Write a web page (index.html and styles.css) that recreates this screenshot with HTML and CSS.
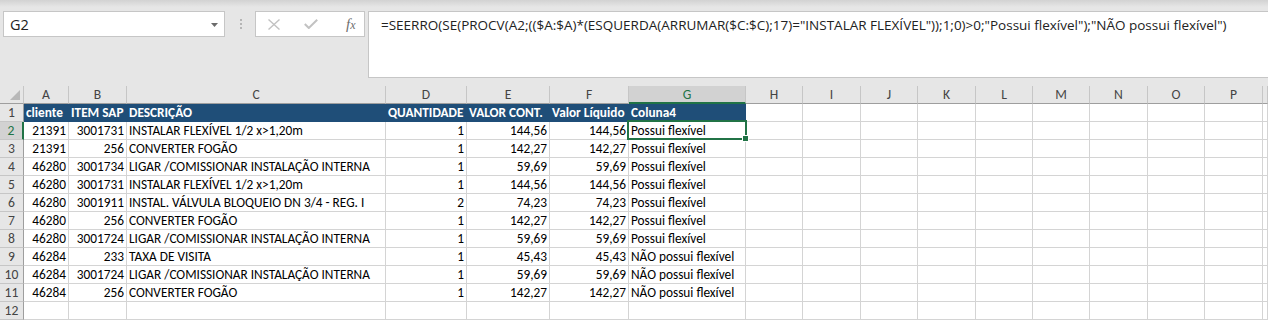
FILE: index.html
```html
<!DOCTYPE html>
<html lang="pt">
<head>
<meta charset="utf-8">
<title>Excel</title>
<link rel="stylesheet" href="styles.css">
</head>
<body>
<div class="topbar">
  <div class="namebox"><span>G2</span><svg class="drop" width="7" height="4" viewBox="0 0 7 4"><path d="M0 0H7L3.5 4Z" fill="#6b6b6b"/></svg></div>
  <div class="grip"><svg width="3" height="11" viewBox="0 0 3 11"><rect x="0" y="0" width="2" height="2" fill="#b5b5b5"/><rect x="0" y="4" width="2" height="2" fill="#b5b5b5"/><rect x="0" y="8" width="2" height="2" fill="#b5b5b5"/></svg></div>
  <div class="fxbtns">
    <svg width="12" height="11" viewBox="0 0 12 11"><path d="M0.5 0.5L11.5 10.5M11.5 0.5L0.5 10.5" stroke="#c2c2c2" stroke-width="1.4" fill="none"/></svg>
    <svg width="14" height="10" viewBox="0 0 14 10"><path d="M0.8 5L4.8 9L13.2 0.8" stroke="#c2c2c2" stroke-width="2" fill="none"/></svg>
    <span class="fx">f<i>x</i></span>
  </div>
  <div class="formula">=SEERRO(SE(PROCV(A2;(($A:$A)*(ESQUERDA(ARRUMAR($C:$C);17)="INSTALAR FLEXÍVEL"));1;0)&gt;0;"Possui flexível");"NÃO possui flexível")</div>
</div>
<div class="sheet">
  <div class="row head">
    <span class="corner"><svg width="10" height="10" viewBox="0 0 10 10"><path d="M10 0V10H0Z" fill="#b8b8b8"/></svg></span>
    <span>A</span><span>B</span><span>C</span><span>D</span><span>E</span><span>F</span><span class="sel">G</span><span>H</span><span>I</span><span>J</span><span>K</span><span>L</span><span>M</span><span>N</span><span>O</span><span>P</span><span></span>
  </div>
  <div class="row">
    <span class="rh">1</span>
    <span class="th">cliente</span><span class="th">ITEM SAP</span><span class="th">DESCRIÇÃO</span><span class="th">QUANTIDADE</span><span class="th">VALOR CONT.</span><span class="th">Valor Líquido</span><span class="th">Coluna4</span><span></span><span></span><span></span><span></span><span></span><span></span><span></span><span></span><span></span><span></span>
  </div>
  <div class="row">
    <span class="rh rsel">2</span>
    <span class="n">21391</span><span class="n">3001731</span><span>INSTALAR FLEXÍVEL 1/2 x&gt;1,20m</span><span class="n">1</span><span class="n">144,56</span><span class="n">144,56</span><span>Possui flexível</span><span></span><span></span><span></span><span></span><span></span><span></span><span></span><span></span><span></span><span></span>
  </div>
  <div class="row">
    <span class="rh">3</span>
    <span class="n">21391</span><span class="n">256</span><span>CONVERTER FOGÃO</span><span class="n">1</span><span class="n">142,27</span><span class="n">142,27</span><span>Possui flexível</span><span></span><span></span><span></span><span></span><span></span><span></span><span></span><span></span><span></span><span></span>
  </div>
  <div class="row">
    <span class="rh">4</span>
    <span class="n">46280</span><span class="n">3001734</span><span>LIGAR /COMISSIONAR INSTALAÇÃO INTERNA</span><span class="n">1</span><span class="n">59,69</span><span class="n">59,69</span><span>Possui flexível</span><span></span><span></span><span></span><span></span><span></span><span></span><span></span><span></span><span></span><span></span>
  </div>
  <div class="row">
    <span class="rh">5</span>
    <span class="n">46280</span><span class="n">3001731</span><span>INSTALAR FLEXÍVEL 1/2 x&gt;1,20m</span><span class="n">1</span><span class="n">144,56</span><span class="n">144,56</span><span>Possui flexível</span><span></span><span></span><span></span><span></span><span></span><span></span><span></span><span></span><span></span><span></span>
  </div>
  <div class="row">
    <span class="rh">6</span>
    <span class="n">46280</span><span class="n">3001911</span><span>INSTAL. VÁLVULA BLOQUEIO DN 3/4 - REG. I</span><span class="n">2</span><span class="n">74,23</span><span class="n">74,23</span><span>Possui flexível</span><span></span><span></span><span></span><span></span><span></span><span></span><span></span><span></span><span></span><span></span>
  </div>
  <div class="row">
    <span class="rh">7</span>
    <span class="n">46280</span><span class="n">256</span><span>CONVERTER FOGÃO</span><span class="n">1</span><span class="n">142,27</span><span class="n">142,27</span><span>Possui flexível</span><span></span><span></span><span></span><span></span><span></span><span></span><span></span><span></span><span></span><span></span>
  </div>
  <div class="row">
    <span class="rh">8</span>
    <span class="n">46280</span><span class="n">3001724</span><span>LIGAR /COMISSIONAR INSTALAÇÃO INTERNA</span><span class="n">1</span><span class="n">59,69</span><span class="n">59,69</span><span>Possui flexível</span><span></span><span></span><span></span><span></span><span></span><span></span><span></span><span></span><span></span><span></span>
  </div>
  <div class="row">
    <span class="rh">9</span>
    <span class="n">46284</span><span class="n">233</span><span>TAXA DE VISITA</span><span class="n">1</span><span class="n">45,43</span><span class="n">45,43</span><span>NÃO possui flexível</span><span></span><span></span><span></span><span></span><span></span><span></span><span></span><span></span><span></span><span></span>
  </div>
  <div class="row">
    <span class="rh">10</span>
    <span class="n">46284</span><span class="n">3001724</span><span>LIGAR /COMISSIONAR INSTALAÇÃO INTERNA</span><span class="n">1</span><span class="n">59,69</span><span class="n">59,69</span><span>NÃO possui flexível</span><span></span><span></span><span></span><span></span><span></span><span></span><span></span><span></span><span></span><span></span>
  </div>
  <div class="row">
    <span class="rh">11</span>
    <span class="n">46284</span><span class="n">256</span><span>CONVERTER FOGÃO</span><span class="n">1</span><span class="n">142,27</span><span class="n">142,27</span><span>NÃO possui flexível</span><span></span><span></span><span></span><span></span><span></span><span></span><span></span><span></span><span></span><span></span>
  </div>
  <div class="row">
    <span class="rh">12</span>
    <span></span><span></span><span></span><span></span><span></span><span></span><span></span><span></span><span></span><span></span><span></span><span></span><span></span><span></span><span></span><span></span><span></span>
  </div>
  <div class="selection"><i class="handle"></i></div>
</div>
</body>
</html>
```
FILE: styles.css
```css
html, body {
  margin: 0;
  padding: 0;
}
body {
  width: 1268px;
  height: 320px;
  overflow: hidden;
  background: #e6e6e6;
  font-family: Carlito, Lato, "Liberation Sans", sans-serif;
}
.topbar {
  display: flex;
  align-items: flex-start;
  height: 86px;
  box-sizing: border-box;
  padding-top: 11px;
  background: linear-gradient(#d2d2d2 0, #e6e6e6 7px);
}
.namebox {
  margin-left: 3px;
  width: 222px;
  height: 26px;
  box-sizing: border-box;
  background: #fff;
  border: 1px solid #c6c6c6;
  display: flex;
  align-items: center;
  justify-content: space-between;
  padding: 0 6px 0 6px;
  font-family: "Open Sans", sans-serif;
  font-size: 14.5px;
  color: #222;
}
.drop {
  margin-top: 1px;
}
.grip {
  width: 30px;
  display: flex;
  justify-content: center;
  padding-top: 8px;
  padding-left: 2px;
  box-sizing: border-box;
}
.fxbtns {
  width: 110px;
  height: 26px;
  box-sizing: border-box;
  background: #fff;
  border: 1px solid #c6c6c6;
  display: flex;
  align-items: center;
  padding-left: 12px;
  gap: 24px;
}
.fx {
  font-family: "Liberation Serif", serif;
  font-style: italic;
  font-size: 15px;
  color: #6e6e6e;
  margin-left: 4px;
}
.fx i {
  font-size: 12px;
}
.formula {
  margin-left: 3px;
  flex: 1;
  height: 67px;
  box-sizing: border-box;
  background: #fff;
  border: 1px solid #c6c6c6;
  border-right: none;
  padding: 4px 0 0 12px;
  font-family: "Open Sans", sans-serif;
  font-size: 13.5px;
  color: #222;
  white-space: nowrap;
}
.sheet {
  position: relative;
  background: #fff;
}
.row {
  display: grid;
  grid-template-columns: 24px 45px 58px 259px 81px 83px 79px 117px 57px 58px 57px 58px 57px 57px 58px 57px 58px 1fr;
  height: 18px;
}
.row > span {
  box-sizing: border-box;
  height: 18px;
  border-right: 1px solid #d4d4d4;
  border-bottom: 1px solid #d4d4d4;
  font-size: 13.3px;
  line-height: 17px;
  padding: 0 2px 0 2px;
  white-space: nowrap;
  overflow: visible;
  color: #000;
}
.row > span.n {
  text-align: right;
}
.row.head > span {
  background: #e6e6e6;
  border-right: 1px solid #c6c6c6;
  border-bottom: 1px solid #9e9e9e;
  text-align: center;
  color: #444;
  padding: 0;
  font-size: 13.6px;
}
.row.head > span.corner {
  display: flex;
  align-items: flex-end;
  justify-content: flex-end;
  padding: 0 3px 3px 0;
}
.row.head > span.sel {
  background: #d2d2d2;
  color: #217346;
  border-bottom: 2px solid #217346;
}
.row > span.rh {
  background: #e6e6e6;
  border-right: 1px solid #9e9e9e;
  border-bottom: 1px solid #c6c6c6;
  text-align: center;
  color: #444;
  padding: 0;
  font-size: 13.6px;
}
.row > span.rsel {
  background: #d2d2d2;
  color: #217346;
  border-right: 2px solid #217346;
}
.row > span.th {
  background: #1f4e78;
  border-right-color: #1f4e78;
  border-bottom-color: #1f4e78;
  color: #fff;
  font-weight: bold;
}
.selection {
  position: absolute;
  left: 627px;
  top: 34px;
  width: 120px;
  height: 20px;
  box-sizing: border-box;
  border: 2px solid #217346;
  pointer-events: none;
}
.handle {
  position: absolute;
  right: -4px;
  bottom: -4px;
  width: 5px;
  height: 5px;
  background: #217346;
  border: 1px solid #fff;
}
```
